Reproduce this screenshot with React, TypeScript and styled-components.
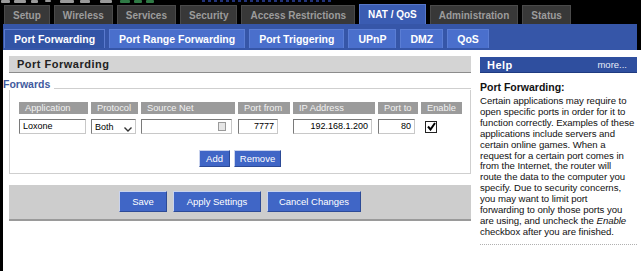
import React from "react";
import styled, { createGlobalStyle } from "styled-components";

const GlobalStyle = createGlobalStyle`
  html, body {
    margin: 0;
    padding: 0;
    background: #000;
  }
  body {
    font-family: "Liberation Sans", Arial, sans-serif;
    font-size: 10px;
    color: #000;
  }
`;

const Page = styled.div`
  width: 641px;
  height: 271px;
  overflow: hidden;
  background: #000;
`;

const LogoStrip = styled.div`
  height: 5px;
  overflow: hidden;
  display: flex;
`;

const MainTabs = styled.div`
  display: flex;
  gap: 4px;
  padding-left: 4px;
  height: 19px;
  align-items: flex-end;
`;

const MainTab = styled.div<{ $active?: boolean }>`
  height: ${(p) => (p.$active ? 20 : 19)}px;
  box-sizing: border-box;
  padding: 0 8px;
  display: flex;
  align-items: center;
  font-weight: bold;
  font-size: 10px;
  color: ${(p) => (p.$active ? "#fff" : "#9c9c9c")};
  background: ${(p) => (p.$active ? "#3a5cb2" : "#383838")};
  border: 1px solid ${(p) => (p.$active ? "#5676c8" : "#4a4a4a")};
  border-bottom: none;
`;

const SubBar = styled.div`
  margin: 0 4px 0 3px;
  height: 26px;
  box-sizing: border-box;
  padding: 5px 0 2px 1px;
  background: #3656a8;
  display: flex;
  gap: 4px;
`;

const SubTab = styled.div<{ $active?: boolean }>`
  box-sizing: border-box;
  padding: 0 9px;
  display: flex;
  align-items: center;
  font-weight: bold;
  font-size: 10.5px;
  color: #fff;
  background: ${(p) => (p.$active ? "#3254a6" : "#4a6fcc")};
  border: 1px solid ${(p) => (p.$active ? "#5a7ace" : "#5a7dd4")};
  border-bottom: none;
`;

const Content = styled.div`
  margin-left: 3px;
  background: #fff;
  height: 221px;
  display: flex;
  gap: 9px;
`;

const LeftCol = styled.div`
  margin-left: 6px;
  width: 462px;
  padding-top: 6px;
  display: flex;
  flex-direction: column;
`;

const SectionHead = styled.div`
  height: 17px;
  box-sizing: border-box;
  background: #d4d4d4;
  border-bottom: 1px solid #8c8c8c;
  padding-left: 8px;
  display: flex;
  align-items: center;
  font-weight: bold;
  font-size: 11px;
  letter-spacing: 0.5px;
  color: #222;
`;

const LegendRow = styled.div`
  display: flex;
  align-items: flex-end;
  margin: 4px 0 0 -6px;
  height: 13px;
`;

const Legend = styled.span`
  font-weight: bold;
  font-size: 10.5px;
  color: #3f5b9e;
  line-height: 11px;
  padding-right: 4px;
`;

const LegendLine = styled.div`
  flex: 1;
  height: 1px;
  background: #cfcfcf;
  margin-bottom: 1px;
`;

const Box = styled.div`
  border: 1px solid #cfcfcf;
  border-top: none;
  padding: 12px 0 6px 9px;
`;

const Grid = styled.div`
  display: grid;
  grid-template-columns: 69px 47px 94px 52px 82px 40px 41px;
  column-gap: 3px;
  row-gap: 5px;
`;

const HeadCell = styled.div`
  height: 12px;
  background: #9b9b9b;
  color: #f2f2f2;
  font-size: 9.3px;
  line-height: 12px;
  padding-left: 6px;
  white-space: nowrap;
  overflow: hidden;
`;

const Cell = styled.div`
  height: 15px;
  display: flex;
  align-items: center;
`;

const TextInput = styled.div<{ $w: number; $right?: boolean }>`
  width: ${(p) => p.$w}px;
  height: 15px;
  box-sizing: border-box;
  border: 1px solid #7a7a7a;
  border-right-color: #c8c8c8;
  border-bottom-color: #c8c8c8;
  background: #fff;
  font-size: 9px;
  line-height: 13px;
  padding: 0 3px;
  display: flex;
  align-items: center;
  justify-content: ${(p) => (p.$right ? "flex-end" : "space-between")};
`;

const PickIcon = styled.span`
  width: 6px;
  height: 7px;
  border: 1px solid #9a9a9a;
  background: #e6e6e6;
  margin-left: auto;
  margin-right: 2px;
`;

const Select = styled.div`
  width: 45px;
  height: 15px;
  box-sizing: border-box;
  border: 1px solid #7a7a7a;
  border-right-color: #c8c8c8;
  border-bottom-color: #c8c8c8;
  background: #fff;
  font-size: 9px;
  padding-left: 3px;
  display: flex;
  align-items: center;
  justify-content: space-between;
`;

const Chevron = styled.svg`
  margin: 5px 3px 0 0;
`;

const Check = styled.div`
  width: 12px;
  height: 12px;
  box-sizing: border-box;
  border: 1px solid #222;
  margin-left: 4px;
  display: flex;
  align-items: center;
  justify-content: center;
  background: #fff;
`;

const ButtonRow = styled.div<{ $gap: number }>`
  display: flex;
  justify-content: center;
  gap: ${(p) => p.$gap}px;
`;

const Button = styled.div<{ $w: number; $h: number }>`
  width: ${(p) => p.$w}px;
  height: ${(p) => p.$h}px;
  box-sizing: border-box;
  background: #4066c6;
  color: #fff;
  font-size: 9.5px;
  display: flex;
  align-items: center;
  justify-content: center;
  border: 1px solid;
  border-color: #c9d3ee #2c4a96 #2c4a96 #c9d3ee;
`;

const ActionsRow = styled(ButtonRow)`
  margin-top: 16px;
  margin-right: 9px;
`;

const SubmitBar = styled.div`
  margin-top: 11px;
  height: 36px;
  box-sizing: border-box;
  background: #cdcdcd;
  border-bottom: 2px solid #9a9a9a;
  display: flex;
  align-items: center;
  justify-content: center;
  padding-bottom: 2px;
`;

const RightCol = styled.div`
  width: 157px;
  padding-top: 7px;
  display: flex;
  flex-direction: column;
`;

const HelpHead = styled.div`
  height: 15px;
  background: #2f4f9f;
  border-bottom: 1px solid #1f3a80;
  display: flex;
  align-items: center;
  justify-content: space-between;
  padding: 0 10px 0 7px;
  color: #fff;
`;

const HelpTitle = styled.span`
  font-weight: bold;
  font-size: 11px;
  letter-spacing: 0.5px;
`;

const More = styled.span`
  font-size: 9.5px;
  color: #e8ecf8;
`;

const HelpHeading = styled.div`
  margin-top: 8px;
  font-weight: bold;
  font-size: 10.5px;
  color: #111;
`;

const HelpText = styled.p`
  margin: 3px 0 0;
  font-size: 9.6px;
  letter-spacing: -0.05px;
  line-height: 10.9px;
  color: #111;
  white-space: nowrap;
`;

const Dots = styled.div`
  margin-top: 6px;
  border-top: 1px dotted #b0b0b0;
`;

const CheckMark = () => (
  <svg width="9" height="9" viewBox="0 0 9 9">
    <path d="M1 4.5 L3.5 7.5 L8 1" stroke="#000" strokeWidth="2" fill="none" />
  </svg>
);

// bottom edge of the router logo, cut off by the top of the window
const LogoEdge = () => (
  <svg width="641" height="5" viewBox="0 0 641 5">
    <g fill="#9a9a9a">
      <rect x="1" y="0" width="9" height="3" rx="1" />
      <rect x="14" y="0" width="12" height="3" rx="1" />
      <rect x="31" y="0" width="7" height="3" rx="1" />
      <rect x="45" y="0" width="6" height="2" rx="1" />
      <rect x="60" y="0" width="14" height="3" rx="1" />
      <rect x="80" y="0" width="10" height="3" rx="1" />
      <rect x="100" y="0" width="12" height="3" rx="1" />
    </g>
    <g fill="#2f7a45">
      <rect x="120" y="0" width="10" height="3" rx="1" />
      <rect x="134" y="0" width="8" height="3" rx="1" />
      <rect x="146" y="0" width="8" height="3" rx="1" />
    </g>
    <g fill="#22337a">
      {Array.from({ length: 22 }).map((_, i) => (
        <rect key={i} x={202 + i * 6} y="0" width="3" height="2" />
      ))}
    </g>
  </svg>
);

const mainTabs = [
  "Setup",
  "Wireless",
  "Services",
  "Security",
  "Access Restrictions",
  "NAT / QoS",
  "Administration",
  "Status",
];
const subTabs = ["Port Forwarding", "Port Range Forwarding", "Port Triggering", "UPnP", "DMZ", "QoS"];
const columns = ["Application", "Protocol", "Source Net", "Port from", "IP Address", "Port to", "Enable"];

const helpLines = [
  "Certain applications may require to",
  "open specific ports in order for it to",
  "function correctly. Examples of these",
  "applications include servers and",
  "certain online games. When a",
  "request for a certain port comes in",
  "from the Internet, the router will",
  "route the data to the computer you",
  "specify. Due to security concerns,",
  "you may want to limit port",
  "forwarding to only those ports you",
];

const App: React.FC = () => {
  return (
    <Page>
      <GlobalStyle />
      <LogoStrip>
        <LogoEdge />
      </LogoStrip>
      <MainTabs>
        {mainTabs.map((t) => (
          <MainTab key={t} $active={t === "NAT / QoS"}>
            {t}
          </MainTab>
        ))}
      </MainTabs>
      <SubBar>
        {subTabs.map((t, i) => (
          <SubTab key={t} $active={i === 0}>
            {t}
          </SubTab>
        ))}
      </SubBar>
      <Content>
        <LeftCol>
          <SectionHead>Port Forwarding</SectionHead>
          <LegendRow>
            <Legend>Forwards</Legend>
            <LegendLine />
          </LegendRow>
          <Box>
            <Grid>
              {columns.map((c) => (
                <HeadCell key={c}>{c}</HeadCell>
              ))}
              <Cell>
                <TextInput $w={67}>Loxone</TextInput>
              </Cell>
              <Cell>
                <Select>
                  Both
                  <Chevron width="8" height="5" viewBox="0 0 8 5">
                    <path d="M0.5 0.5 L4 4 L7.5 0.5" stroke="#333" strokeWidth="1.4" fill="none" />
                  </Chevron>
                </Select>
              </Cell>
              <Cell>
                <TextInput $w={91}>
                  <PickIcon />
                </TextInput>
              </Cell>
              <Cell>
                <TextInput $w={40} $right>
                  7777
                </TextInput>
              </Cell>
              <Cell>
                <TextInput $w={79} $right>
                  192.168.1.200
                </TextInput>
              </Cell>
              <Cell>
                <TextInput $w={37} $right>
                  80
                </TextInput>
              </Cell>
              <Cell>
                <Check>
                  <CheckMark />
                </Check>
              </Cell>
            </Grid>
            <ActionsRow $gap={4}>
              <Button $w={31} $h={17}>Add</Button>
              <Button $w={47} $h={17}>Remove</Button>
            </ActionsRow>
          </Box>
          <SubmitBar>
            <ButtonRow $gap={6}>
              <Button $w={48} $h={21}>Save</Button>
              <Button $w={88} $h={21}>Apply Settings</Button>
              <Button $w={94} $h={21}>Cancel Changes</Button>
            </ButtonRow>
          </SubmitBar>
        </LeftCol>
        <RightCol>
          <HelpHead>
            <HelpTitle>Help</HelpTitle>
            <More>more...</More>
          </HelpHead>
          <HelpHeading>Port Forwarding:</HelpHeading>
          <HelpText>
            {helpLines.map((l) => (
              <React.Fragment key={l}>
                {l}
                <br />
              </React.Fragment>
            ))}
            are using, and uncheck the <i>Enable</i>
            <br />
            checkbox after you are finished.
          </HelpText>
          <Dots />
        </RightCol>
      </Content>
    </Page>
  );
};

export default App;
